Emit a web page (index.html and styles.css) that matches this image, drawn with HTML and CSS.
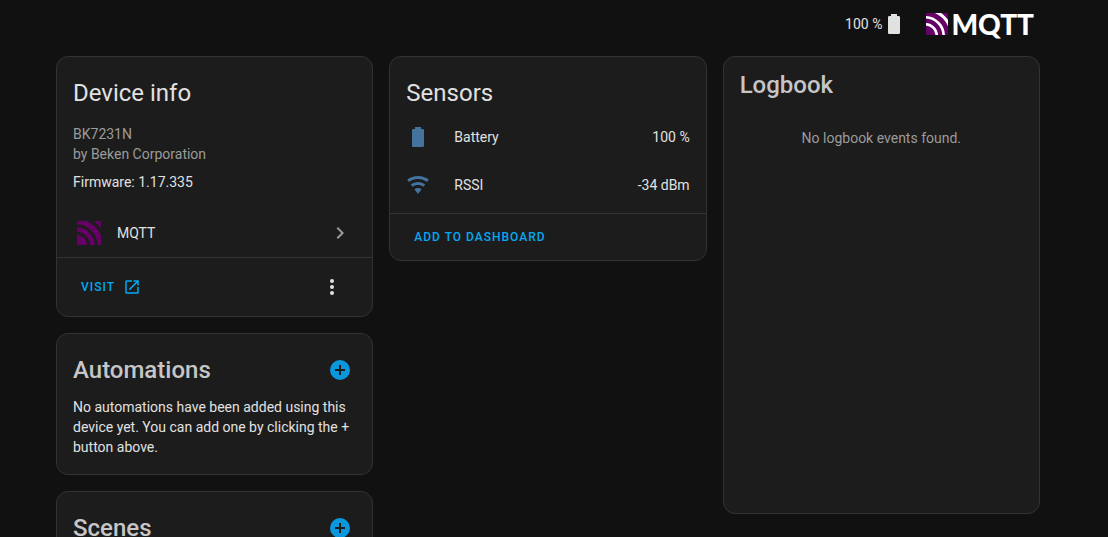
FILE: index.html
```html
<!DOCTYPE html>
<html lang="en">
<head>
  <meta charset="UTF-8">
  <meta name="viewport" content="width=device-width, initial-scale=1.0">
  <title>Device info</title>
  <link rel="stylesheet" href="styles.css">
</head>
<body>
  <header class="header">
    <div class="battery">
      <span>100 %</span>
      <svg class="icon" viewBox="0 0 24 24"><path d="M16.67,4H15V2H9V4H7.33A1.33,1.33 0 0,0 6,5.33V20.67C6,21.4 6.6,22 7.33,22H16.67A1.33,1.33 0 0,0 18,20.67V5.33C18,4.6 17.4,4 16.67,4Z"/></svg>
    </div>
    <div class="logo">
      <svg class="logo-mark" viewBox="0 0 24 24">
        <rect width="24" height="24" rx="1"/>
        <circle cx="-1" cy="25" r="12.8" stroke-width="2.8"/>
        <circle cx="-1" cy="25" r="20.3" stroke-width="2.8"/>
        <circle cx="-1" cy="25" r="28.8" stroke-width="3.4"/>
      </svg>
      <span class="logo-text">MQTT</span>
    </div>
  </header>

  <main class="columns">
    <div class="column">
      <!-- Device info -->
      <section class="card">
        <h1 class="card-title">Device info</h1>
        <div class="device">
          <p class="secondary">BK7231N</p>
          <p class="secondary">by Beken Corporation</p>
          <p class="firmware">Firmware: 1.17.335</p>
        </div>
        <a class="integration" href="#">
          <svg class="integration-mark" viewBox="0 0 24 24">
            <rect width="24" height="24" rx="1"/>
            <circle cx="-1" cy="25" r="12.8" stroke-width="2.8"/>
            <circle cx="-1" cy="25" r="20.3" stroke-width="2.8"/>
            <circle cx="-1" cy="25" r="28.8" stroke-width="3.4"/>
          </svg>
          <span>MQTT</span>
          <svg class="icon chevron" viewBox="0 0 24 24"><path d="M8.59,16.58L13.17,12L8.59,7.41L10,6L16,12L10,18L8.59,16.58Z"/></svg>
        </a>
        <div class="card-actions device-actions">
          <a class="action" href="#">Visit
            <svg class="icon-small" viewBox="0 0 24 24"><path d="M14,3V5H17.59L7.76,14.83L9.17,16.24L19,6.41V10H21V3M19,19H5V5H12V3H5C3.89,3 3,3.9 3,5V19A2,2 0 0,0 5,21H19A2,2 0 0,0 21,19V12H19V19Z"/></svg>
          </a>
          <button class="icon-button menu" aria-label="Menu">
            <svg class="icon" viewBox="0 0 24 24"><circle cx="12" cy="6" r="2"/><circle cx="12" cy="12" r="2"/><circle cx="12" cy="18" r="2"/></svg>
          </button>
        </div>
      </section>

      <!-- Automations -->
      <section class="card">
        <div class="card-head">
          <h1 class="card-title muted">Automations</h1>
          <button class="icon-button add" aria-label="Add automation">
            <svg class="icon" viewBox="0 0 24 24"><path d="M17,13H13V17H11V13H7V11H11V7H13V11H17M12,2A10,10 0 0,0 2,12A10,10 0 0,0 12,22A10,10 0 0,0 22,12A10,10 0 0,0 12,2Z"/></svg>
          </button>
        </div>
        <p class="card-text">No automations have been added using this device yet. You can add one by clicking the + button above.</p>
      </section>

      <!-- Scenes -->
      <section class="card">
        <div class="card-head">
          <h1 class="card-title muted">Scenes</h1>
          <button class="icon-button add" aria-label="Add scene">
            <svg class="icon" viewBox="0 0 24 24"><path d="M17,13H13V17H11V13H7V11H11V7H13V11H17M12,2A10,10 0 0,0 2,12A10,10 0 0,0 12,22A10,10 0 0,0 22,12A10,10 0 0,0 12,2Z"/></svg>
          </button>
        </div>
      </section>
    </div>

    <div class="column">
      <!-- Sensors -->
      <section class="card">
        <h1 class="card-title">Sensors</h1>
        <div class="sensors">
          <div class="sensor">
            <svg class="icon" viewBox="0 0 24 24"><path d="M16.67,4H15V2H9V4H7.33A1.33,1.33 0 0,0 6,5.33V20.67C6,21.4 6.6,22 7.33,22H16.67A1.33,1.33 0 0,0 18,20.67V5.33C18,4.6 17.4,4 16.67,4Z"/></svg>
            <span class="sensor-name">Battery</span>
            <span>100 %</span>
          </div>
          <div class="sensor">
            <svg class="icon" viewBox="0 0 24 24"><path d="M12,21L15.6,16.2C14.6,15.45 13.35,15 12,15C10.65,15 9.4,15.45 8.4,16.2L12,21M12,3C7.95,3 4.21,4.34 1.2,6.6L3,9C5.5,7.12 8.62,6 12,6C15.38,6 18.5,7.12 21,9L22.8,6.6C19.79,4.34 16.05,3 12,3M12,9C9.3,9 6.81,9.89 4.8,11.4L6.6,13.8C8.1,12.67 9.97,12 12,12C14.03,12 15.9,12.67 17.4,13.8L19.2,11.4C17.19,9.89 14.7,9 12,9Z"/></svg>
            <span class="sensor-name">RSSI</span>
            <span>-34 dBm</span>
          </div>
        </div>
        <div class="card-actions">
          <button class="action">Add to dashboard</button>
        </div>
      </section>
    </div>

    <div class="column">
      <!-- Logbook -->
      <section class="card logbook">
        <h1 class="logbook-title muted">Logbook</h1>
        <p class="logbook-empty">No logbook events found.</p>
      </section>
    </div>
  </main>
</body>
</html>
```
FILE: styles.css
```css
* {
  box-sizing: border-box;
}

body {
  margin: 0;
  height: 100vh;
  overflow: hidden;
  padding: 0 68px 0 56px;
  background: #111111;
  color: #e1e1e1;
  font-family: Roboto, sans-serif;
  font-size: 14px;
  line-height: 20px;
}

h1,
p {
  margin: 0;
}

a {
  color: inherit;
  text-decoration: none;
}

button {
  padding: 0;
  border: none;
  background: none;
  font-family: inherit;
  cursor: pointer;
}

svg {
  display: block;
  flex: none;
  fill: currentColor;
}

.icon {
  width: 24px;
  height: 24px;
}

.icon-small {
  width: 18px;
  height: 18px;
}

/* Header */
.header {
  display: flex;
  justify-content: flex-end;
  align-items: center;
  gap: 20px;
  height: 56px;
  padding: 0 6px 8px 0;
}

.battery,
.logo {
  display: flex;
  align-items: center;
}

.logo {
  gap: 3px;
}

.logo-mark {
  width: 22px;
  height: 22px;
  fill: #660066;
}

.logo-mark circle {
  fill: none;
  stroke: #ffffff;
}

.logo-text {
  color: #ffffff;
  font-family: Lato, sans-serif;
  font-size: 28px;
  font-weight: 900;
  line-height: 32px;
}

/* Columns and cards */
.columns {
  display: grid;
  grid-template-columns: repeat(3, 1fr);
  align-items: start;
  gap: 16px;
}

.column {
  display: flex;
  flex-direction: column;
  gap: 16px;
}

.card {
  border: 1px solid #333333;
  border-radius: 12px;
  background: #1c1c1c;
}

.card-title {
  padding: 12px 16px 0;
  font-size: 24px;
  font-weight: 400;
  line-height: 48px;
}

.muted {
  color: #c6c6c6;
  font-weight: 500;
}

.card-head {
  display: flex;
  justify-content: space-between;
}

.card-text {
  padding: 3px 16px 17px;
}

.card-actions {
  display: flex;
  align-items: center;
  height: 47px;
  padding: 0 24px;
  border-top: 1px solid #333333;
}

.action {
  display: flex;
  align-items: center;
  gap: 8px;
  color: #03a9f4;
  font-size: 12px;
  font-weight: 500;
  letter-spacing: 1px;
  text-transform: uppercase;
}

.icon-button {
  display: flex;
}

.add {
  margin: 24px 20px 0 0;
  color: #0a97db;
}

/* Device info */
.device {
  padding: 7px 16px 0;
}

.secondary {
  color: #9b9b9b;
}

.firmware {
  margin-top: 8px;
}

.integration {
  display: flex;
  align-items: center;
  gap: 16px;
  height: 49px;
  margin-top: 16px;
  padding: 0 20px;
}

.integration-mark {
  width: 24px;
  height: 24px;
  fill: #660066;
}

.integration-mark circle {
  fill: none;
  stroke: #1c1c1c;
}

.chevron {
  margin-left: auto;
  color: #9b9b9b;
}

.device-actions {
  justify-content: space-between;
  height: 59px;
}

.menu {
  margin-right: 4px;
  color: #e1e1e1;
}

/* Sensors */
.sensors {
  display: flex;
  flex-direction: column;
  gap: 8px;
  padding: 0 16px 8px;
}

.sensor {
  display: flex;
  align-items: center;
  height: 40px;
}

.sensor .icon {
  color: #44739e;
}

.sensor-name {
  flex: 1;
  margin-left: 24px;
}

/* Logbook */
.logbook {
  height: 458px;
}

.logbook-title {
  padding: 12px 16px 0;
  font-size: 24px;
  line-height: 32px;
}

.logbook-empty {
  padding-top: 27px;
  color: #9b9b9b;
  text-align: center;
}
```
